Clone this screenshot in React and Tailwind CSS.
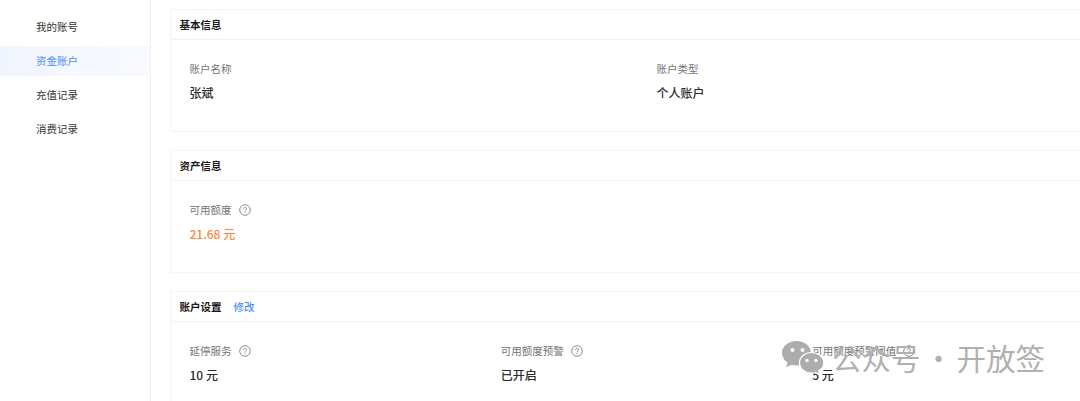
import React from 'react';

const menus = ['我的账号', '资金账户', '充值记录', '消费记录'];

function HelpIcon() {
    return (
        <svg viewBox="0 0 12 12" fill="none" className="w-[12px] h-[12px] shrink-0 text-[#808080]">
            <circle cx="6" cy="6" r="5.3" stroke="currentColor" strokeWidth="0.9" />
            <path d="M4.5 4.7a1.5 1.5 0 1 1 2.3 1.3c-.5.3-.8.6-.8 1.1" stroke="currentColor" strokeWidth="0.9" strokeLinecap="round" />
            <circle cx="6" cy="8.8" r="0.55" fill="currentColor" />
        </svg>
    );
}

function Field({ label, value, help, valueClass }) {
    return (
        <div>
            <div className="flex items-center gap-[7px] h-[16px] text-[10.5px] leading-[16px] text-[#747474]">
                <span>{label}</span>
                {help && <HelpIcon />}
            </div>
            <div className={`mt-[7px] h-[18px] text-[12px] leading-[18px] font-medium ${valueClass || 'text-[#2b2b2b]'}`}>{value}</div>
        </div>
    );
}

function Card({ title, action, cols, children }) {
    return (
        <section className="h-[123px] w-[973px] shrink-0 border border-[#f4f4f4] bg-white">
            <div className="flex items-center gap-[12px] h-[30px] px-[8.5px] border-b border-[#f2f2f2] text-[10.5px] leading-[16px]">
                <span className="font-bold text-[#1a1a1a]">{title}</span>
                {action && <span className="font-medium text-[#4a90f5]">{action}</span>}
            </div>
            <div className={`grid ${cols} px-[18.5px] pt-[21px]`}>{children}</div>
        </section>
    );
}

function Watermark() {
    return (
        <div className="absolute left-[782px] top-[338px] flex items-center text-[29.5px] leading-[36px] text-[#b0b0b0] pointer-events-none">
            <svg viewBox="0 0 42 35" className="mt-[2px] w-[42px] h-[35px] shrink-0">
                <path d="M14.5 1C6.500 1 0 6.300 0 13c0 3.900 2.200 7.300 5.600 9.500L4 27.500l5.400-2.800c1.600.5 3.300.7 5.100.7 8 0 14.500-5.500 14.500-12.400S22.500 1 14.500 1z" fill="#adadad" />
                <circle cx="10.500" cy="10" r="2" fill="#fff" />
                <circle cx="20.500" cy="10" r="2" fill="#fff" />
                <path d="M29.500 12.500C22.800 12.500 17.500 17 17.500 22.800s5.300 10.300 12 10.300c1.400 0 2.800-.2 4.100-.6l4.200 2.300-1.100-3.800C39.900 29 41.800 26.100 41.800 22.800c0-5.800-5.500-10.300-12.300-10.300z" fill="#adadad" stroke="#fff" strokeWidth="1.200" />
                <circle cx="25" cy="20.500" r="1.700" fill="#fff" />
                <circle cx="34" cy="20.500" r="1.700" fill="#fff" />
            </svg>
            <span className="ml-[8px] whitespace-nowrap">公众号</span>
            <span className="w-[36px] text-center">·</span>
            <span className="whitespace-nowrap">开放签</span>
        </div>
    );
}

export default function App() {
    return (
        <div className="relative flex h-[401px] w-[1080px] overflow-hidden bg-white font-['Noto_Sans_CJK_SC','Liberation_Sans',sans-serif]">
            <aside className="w-[151px] shrink-0 border-r border-[#f0f0f0] pt-[12px] flex flex-col gap-[4px]">
                {menus.map((m) => (
                    <div
                        key={m}
                        className={`h-[30px] pl-[36px] flex items-center text-[10.5px] ${m === '资金账户' ? 'bg-gradient-to-r from-[#f1f5fe] to-[#f8faff] text-[#4a90f5]' : 'text-[#333333]'}`}
                    >
                        {m}
                    </div>
                ))}
            </aside>
            <main className="flex-1 pl-[19px] pt-[9px] flex flex-col gap-[18px]">
                <Card title="基本信息" cols="grid-cols-2">
                    <Field label="账户名称" value="张斌" />
                    <Field label="账户类型" value="个人账户" />
                </Card>
                <Card title="资产信息" cols="grid-cols-2">
                    <Field label="可用额度" value="21.68 元" help valueClass="text-[#f58a3c] font-bold" />
                </Card>
                <Card title="账户设置" action="修改" cols="grid-cols-3">
                    <Field label="延停服务" value="10 元" help />
                    <Field label="可用额度预警" value="已开启" help />
                    <Field label="可用额度预警阈值" value="5 元" help />
                </Card>
            </main>
            <Watermark />
        </div>
    );
}
